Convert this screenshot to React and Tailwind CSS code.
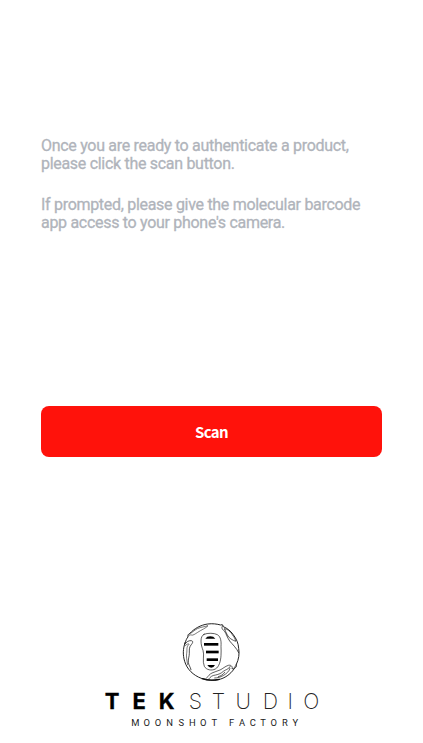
function Emblem() {
  return (
    <svg className="h-[68px] w-[72px]" viewBox="0 0 216 204" fill="none" stroke="#111" strokeWidth="2.8" strokeLinecap="round" strokeLinejoin="round">
      <path d="M30 75C33 67 35 61 39 57C38 51 40 48 44 47C57 32 77 21 98 18C113 16 126 18 137 21L142 20L145 26C157 31 167 39 174 49C185 63 190 76 191 91C194 107 191 125 184 139C185 145 183 149 179 150L177 153C166 169 149 181 130 185C114 189 98 187 84 182L79 181C55 172 36 154 29 130C23 111 24 91 30 75Z" />
      <path d="M44 47C51 45 57 37 67 32C78 27 91 26 99 23C94 30 78 36 68 43C60 48 54 53 49 51C46 50 42 51 40 54" strokeWidth="1.7" />
      <path d="M29 79C34 71 42 67 49 68C56 70 53 75 48 81C42 88 43 96 43 106C43 115 39 124 40 133C41 142 46 146 48 155" strokeWidth="2.2" />
      <path d="M30 83C36 78 42 76 42 79C33 87 37 96 35 106C33 116 36 128 38 140" strokeWidth="1.7" />
      <path d="M143 24C138 28 141 34 149 40C154 48 157 59 164 69C172 79 184 89 191 104" strokeWidth="2.2" />
      <path d="M149 33C156 31 165 40 172 50C178 58 181 64 182 70C172 66 162 61 157 51C153 44 151 38 149 33Z" strokeWidth="2" />
      <path d="M184 139C180 146 179 151 171 153C174 145 167 140 160 142C150 145 144 152 135 156C127 160 118 161 111 165C104 168 100 174 94 181" strokeWidth="2" />
      <path d="M166 145C160 155 151 155 145 160C139 166 131 169 122 171C111 172 106 177 102 182M165 151C163 160 154 167 146 172C138 177 128 180 119 180M149 163C145 170 137 174 130 176" strokeWidth="2" />
      <path d="M81 182C96 187 114 188 133 184" strokeWidth="3.5" />
      <path d="M87 49C98 44 118 45 127 50C138 56 139 72 138 85C138 95 139 103 138 113C137 130 132 147 121 153C110 159 94 156 88 145C81 130 89 110 84 97C81 89 78 80 78 69C78 59 81 52 87 49Z" strokeWidth="2" />
      <g fill="#000" stroke="none">
        <path d="M91 62Q95 55 106 55Q116 55 121 62Z" />
        <rect x="87" y="75" width="43" height="8" />
        <rect x="93" y="98" width="38" height="8" />
        <rect x="95" y="121" width="34" height="8" />
        <path d="M97 141H120Q116 149 109 149Q101 149 97 141Z" />
      </g>
    </svg>
  );
}

function Wordmark() {
  return (
    <svg className="h-[46px] w-[423px]" viewBox="0 686 423 46" textAnchor="middle" aria-label="Tek Studio Moonshot Factory">
      <g className="font-['Inter',sans-serif]">
        <text x="112 139.3 166.6" y="709.3" fontSize="22" fontWeight="700" fill="#000" stroke="#000" strokeWidth="0.3">TEK</text>
        <text x="195.3 218.5 243.3 270.3 290.3 311.3" y="708.5" fontSize="21.3" fontWeight="200" fill="#222">STUDIO</text>
      </g>
      <g className="font-['Roboto',sans-serif]" fontSize="9.4" fill="#222">
        <text x="135.3 146.7 158 169.7 181.3 192.3 203.3 214.3" y="726">MOONSHOT</text>
        <text x="231.5 242 252.7 263 273.7 285 295.3" y="726">FACTORY</text>
      </g>
    </svg>
  );
}

export default function App() {
  return (
    <main className="flex h-[743px] w-[423px] flex-col overflow-hidden bg-white">
      <section className="ml-[41px] mt-[137px] flex flex-col gap-6 whitespace-nowrap font-['Roboto',sans-serif] text-[16px] leading-[17.7px] tracking-[-0.3px] text-[#b0b4bb] [-webkit-text-stroke:0.3px_#b0b4bb]">
        <p>Once you are ready to authenticate a product,<br />please click the scan button.</p>
        <p>If prompted, please give the molecular barcode<br />app access to your phone's camera.</p>
      </section>
      <button className="ml-[41px] mt-[174px] h-[51.6px] w-[341px] shrink-0 rounded-lg bg-[#ff120b] pt-px font-['Noto_Sans_CJK_SC',sans-serif] text-[15px] font-bold tracking-[-0.7px] text-white">Scan</button>
      <footer className="mt-[160.6px] flex shrink-0 flex-col">
        <div className="ml-[175px]"><Emblem /></div>
        <Wordmark />
      </footer>
    </main>
  );
}
